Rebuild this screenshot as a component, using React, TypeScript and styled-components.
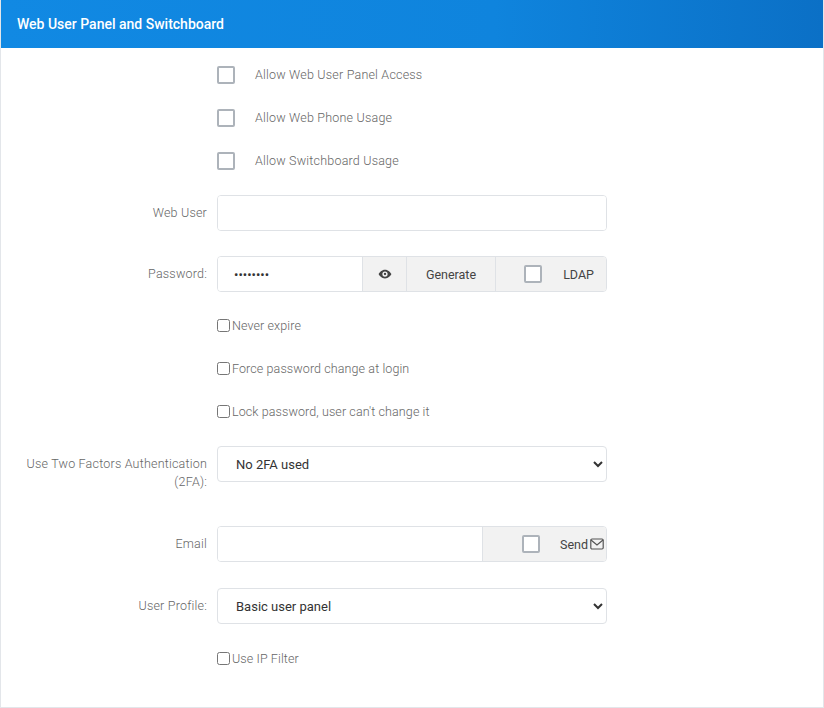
import React from 'react';
import styled, { createGlobalStyle } from 'styled-components';

const Global = createGlobalStyle`
  body { margin: 0; font-family: Roboto, "Liberation Sans", sans-serif; background: #fff; }
  * { box-sizing: border-box; }
`;

const Panel = styled.div`
  width: 824px;
  height: 708px;
  border: 1px solid #e3e6ea;
  border-top: 0;
  overflow: hidden;
`;

const Header = styled.div`
  height: 48px;
  background: linear-gradient(90deg, #1189e3 0%, #0f84dd 60%, #0b70c6 100%);
  color: #fff;
  font-size: 14px;
  font-weight: 500;
  display: flex;
  align-items: center;
  padding-left: 16px;
`;

const Body = styled.div`
  padding-top: 5px;
`;

const Row = styled.div<{ $mt?: number; $h?: number; $top?: boolean }>`
  display: grid;
  grid-template-columns: 206px 390px;
  column-gap: 10px;
  align-items: ${p => (p.$top ? 'start' : 'center')};
  margin-top: ${p => p.$mt ?? 0}px;
  min-height: ${p => p.$h ?? 36}px;
`;

const Label = styled.div<{ $pt?: number }>`
  text-align: right;
  font-size: 12.5px;
  font-weight: 300;
  letter-spacing: 0.2px;
  color: #666;
  line-height: 18px;
  padding-top: ${p => p.$pt ?? 0}px;
`;

const Box = styled.span`
  width: 18px;
  height: 18px;
  border: 2px solid #adb3ba;
  border-radius: 2px;
  background: #fff;
  flex: none;
`;

const BoxLine = styled.label`
  display: flex;
  align-items: center;
  gap: 20px;
  font-size: 12.5px;
  font-weight: 300;
  letter-spacing: 0.2px;
  color: #666;
`;

const NativeLine = styled.label`
  display: flex;
  align-items: center;
  font-size: 12.5px;
  font-weight: 300;
  letter-spacing: 0.1px;
  color: #666;
  input { margin: 0 2px 0 0; width: 13px; height: 13px; }
`;

const Group = styled.div`
  display: flex;
  height: 36px;
  border: 1px solid #dfe2e6;
  border-radius: 4px;
  overflow: hidden;
`;

const Input = styled.input<{ $w?: number }>`
  border: 0;
  outline: none;
  padding: 0 16px;
  font-size: 13px;
  font-family: inherit;
  color: #333;
  width: ${p => (p.$w ? `${p.$w}px` : 'auto')};
  flex: ${p => (p.$w ? 'none' : '1')};
  min-width: 0;
  background: #fff;
`;

const Addon = styled.div<{ $w: number; $justify?: string; $pr?: number; $gap?: number }>`
  width: ${p => p.$w}px;
  flex: none;
  background: #f2f2f2;
  border-left: 1px solid #dfe2e6;
  display: flex;
  align-items: center;
  justify-content: ${p => p.$justify ?? 'center'};
  padding-right: ${p => p.$pr ?? 0}px;
  gap: ${p => p.$gap ?? 8}px;
  font-size: 12.5px;
  color: #444;
`;

const SendLabel = styled.span`
  display: flex;
  align-items: center;
  gap: 2px;
`;

const Select = styled.select`
  height: 36px;
  border: 1px solid #dfe2e6;
  border-radius: 4px;
  background: #fff;
  padding: 0 14px;
  font-size: 13px;
  font-family: inherit;
  color: #333;
`;

const Eye = () => (
  <svg width="14" height="14" viewBox="0 0 24 24" fill="#444">
    <path d="M12 4.5C6.5 4.5 2.5 9 1 12c1.5 3 5.5 7.5 11 7.5s9.5-4.5 11-7.5c-1.5-3-5.5-7.5-11-7.5zm0 12a4.5 4.5 0 1 1 0-9 4.5 4.5 0 0 1 0 9zm0-6.5a2 2 0 1 0 0 4 2 2 0 0 0 0-4z" />
  </svg>
);

const Mail = () => (
  <svg width="14" height="12" viewBox="0 0 14 12" fill="none" stroke="#555" strokeWidth="1.2">
    <rect x="0.8" y="1" width="12.4" height="10" rx="1.2" />
    <path d="M1 2l6 5 6-5" />
  </svg>
);

const App = () => (
  <>
    <Global />
    <Panel>
      <Header>Web User Panel and Switchboard</Header>
      <Body>
        {['Allow Web User Panel Access', 'Allow Web Phone Usage', 'Allow Switchboard Usage'].map(t => (
          <Row key={t} $h={43}>
            <div />
            <BoxLine><Box />{t}</BoxLine>
          </Row>
        ))}
        <Row $mt={13}>
          <Label>Web User</Label>
          <Group><Input /></Group>
        </Row>
        <Row $mt={25}>
          <Label>Password:</Label>
          <Group>
            <Input $w={144} type="password" defaultValue="12345678" />
            <Addon $w={44}><Eye /></Addon>
            <Addon $w={89}>Generate</Addon>
            <Addon $w={111} $justify="flex-end" $pr={12} $gap={21}><Box />LDAP</Addon>
          </Group>
        </Row>
        <Row $mt={12} $h={43}>
          <div />
          <NativeLine><input type="checkbox" />Never expire</NativeLine>
        </Row>
        <Row $h={43}>
          <div />
          <NativeLine><input type="checkbox" />Force password change at login</NativeLine>
        </Row>
        <Row $h={43}>
          <div />
          <NativeLine><input type="checkbox" />Lock password, user can't change it</NativeLine>
        </Row>
        <Row $mt={13} $top>
          <Label $pt={9}>Use Two Factors Authentication (2FA):</Label>
          <Select defaultValue="no"><option value="no">No 2FA used</option></Select>
        </Row>
        <Row $mt={35}>
          <Label>Email</Label>
          <Group>
            <Input $w={264} />
            <Addon $w={124} $justify="flex-end" $pr={2} $gap={20}>
              <Box /><SendLabel>Send<Mail /></SendLabel>
            </Addon>
          </Group>
        </Row>
        <Row $mt={26}>
          <Label>User Profile:</Label>
          <Select defaultValue="basic"><option value="basic">Basic user panel</option></Select>
        </Row>
        <Row $mt={12} $h={44}>
          <div />
          <NativeLine><input type="checkbox" />Use IP Filter</NativeLine>
        </Row>
      </Body>
    </Panel>
  </>
);

export default App;
